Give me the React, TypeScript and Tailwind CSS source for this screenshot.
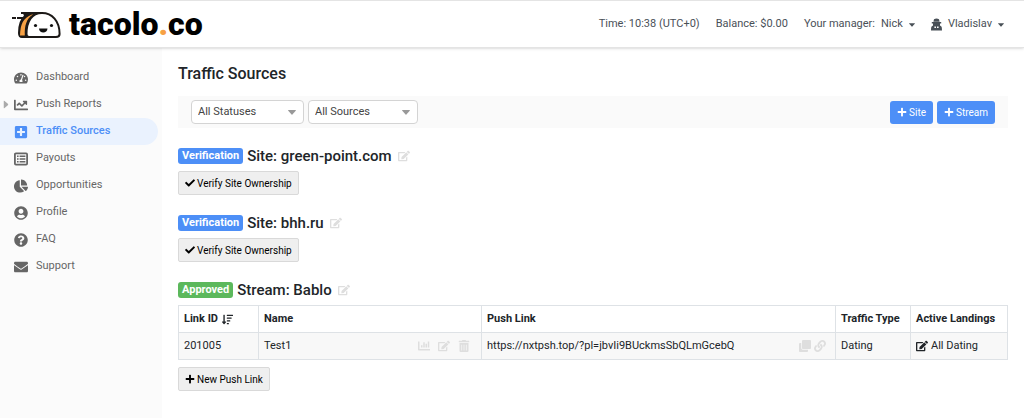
import React from "react";
import {
  FaTachometerAlt, FaChartLine, FaPlusSquare, FaChartPie, FaUserCircle, FaQuestionCircle,
  FaEnvelope, FaEdit, FaCheck, FaPlus, FaChartBar, FaTrashAlt, FaClone, FaLink, FaSortAmountDown,
} from "react-icons/fa";

function ListIcon() {
  return (
    <svg viewBox="0 0 14 14" className="size-3.5" aria-hidden="true">
      <rect x="0.9" y="1.4" width="12.2" height="11.2" rx="1" fill="none" stroke="currentColor" strokeWidth="1.8" />
      <path d="M3 4.3H4.6M5.6 4.3H11.4M3 7H4.6M5.6 7H11.4M3 9.7H4.6M5.6 9.7H11.4" stroke="currentColor" strokeWidth="1.6" />
    </svg>
  );
}

function AgentIcon() {
  return (
    <svg viewBox="0 0 11 13" className="h-[13px] w-[11px]" fill="currentColor" aria-hidden="true">
      <path d="M3 1.2Q5.5 0 8 1.2L8.6 3.8H2.4ZM0.8 4H10.2V5.4H0.8ZM2 5.4H9V7.6L10.4 8.6Q11 9.4 11 12.4H0Q0 9.4 0.6 8.6L2 7.6Z" />
      <path d="M3.4 8.6H5V10H3.4ZM6 8.6H7.6V10H6Z" fill="#fff" />
    </svg>
  );
}

function DownTriangle({ className = "h-[5px] w-2" }: { className?: string }) {
  return (
    <svg viewBox="0 0 8 5" className={"shrink-0 " + className} fill="currentColor" aria-hidden="true">
      <path d="M0.4 0H7.6Q8.2 0.2 7.7 0.8L4.4 4.6Q4 5 3.6 4.6L0.3 0.8Q-0.2 0.2 0.4 0Z" />
    </svg>
  );
}

const nav = [
  { label: "Dashboard", Icon: FaTachometerAlt },
  { label: "Push Reports", Icon: FaChartLine, expandable: true },
  { label: "Traffic Sources", Icon: FaPlusSquare, active: true },
  { label: "Payouts", Icon: ListIcon },
  { label: "Opportunities", Icon: FaChartPie },
  { label: "Profile", Icon: FaUserCircle },
  { label: "FAQ", Icon: FaQuestionCircle },
  { label: "Support", Icon: FaEnvelope },
];

function Logo() {
  return (
    <a href="#" aria-label="tacolo.co" className="flex items-center gap-[7px]">
      <svg viewBox="0 0 50 30" className="h-[30px] w-[50px]" fill="none" aria-hidden="true">
        <path d="M31 4H12L13 7C8 11 7 18 7 24Q7 28 10 28H18L22 4" fill="#1c1917" stroke="#1c1917" strokeWidth="2" strokeLinejoin="round" />
        <path d="M20 5.500C11 9 8.500 15 8 26.500H12.800C12.500 17 14 10 21 5.500Z" fill="#f7a144" />
        <path d="M17 28H44Q47.600 28 47.600 25C47.600 12 40 4 30 4C20 4 14.500 12 14.500 25Q14.500 28 17 28Z" fill="#fff" stroke="#1c1917" strokeWidth="2" />
        <path d="M9 4H16M0 9H4M5 9H12" stroke="#1c1917" strokeWidth="1.8" />
        <circle cx="23.500" cy="16.500" r="1.600" fill="#111" />
        <circle cx="39.500" cy="16.500" r="1.600" fill="#111" />
        <path d="M27 19.500H35.500C35.500 24.800 27 24.800 27 19.500Z" fill="#111" />
      </svg>
      <span className="text-[32px] leading-10 font-black text-black">
        tacolo<span className="text-[#f7a144]">.</span>co
      </span>
    </a>
  );
}

function Heading({ tag, color, children }: { tag: string; color: string; children: React.ReactNode }) {
  return (
    <h2 className="mb-[7px] flex h-4 items-center text-[15px] font-medium">
      <span className={"mr-1 rounded-[3px] px-1 text-[11px] leading-4 font-bold text-white " + color}>{tag}</span>
      {children}
      <button aria-label="Edit" className="ml-1.5 text-xs text-[#dedede]"><FaEdit /></button>
    </h2>
  );
}

function GrayButton({ icon, children }: { icon: React.ReactNode; children: React.ReactNode }) {
  return (
    <button className="flex h-6 items-center gap-0.5 rounded-xs border border-[#d9d9d9] bg-[#efefef] px-1.5 text-[10px] text-black">
      {icon}{children}
    </button>
  );
}

function BlueButton({ children }: { children: React.ReactNode }) {
  return (
    <button className="flex h-[23px] items-center gap-0.5 rounded-[3px] bg-[#4d8ff7] px-[7px] text-[10px] text-white">
      <FaPlus />{children}
    </button>
  );
}

function SiteBlock({ name }: { name: string }) {
  return (
    <section className="mb-5">
      <Heading tag="Verification" color="bg-[#4d8ff7]">Site: {name}</Heading>
      <GrayButton icon={<FaCheck />}>Verify Site Ownership</GrayButton>
    </section>
  );
}

function Filter({ label, width }: { label: string; width: string }) {
  return (
    <div className={"relative " + width}>
      <select aria-label={label} className="block h-6 w-full appearance-none rounded border border-[#d4d4d4] bg-white pl-1.5 text-[11px] text-[#444]">
        <option>{label}</option>
      </select>
      <DownTriangle className="pointer-events-none absolute top-2.5 right-2 h-[5px] w-2 text-[#999]" />
    </div>
  );
}

export default function App() {
  const cell = "border border-[#dee2e6] px-[5px] text-left whitespace-nowrap";
  return (
    <div className="flex min-h-screen flex-col bg-white font-['Roboto',sans-serif] text-[11px] text-[#212529]">
      <header className="relative flex h-12 items-center justify-between border-t border-b border-[#e4e4e4] pr-5 pl-3 shadow-sm">
        <Logo />
        <div className="flex items-center gap-4 pt-px text-[#495057]">
          <span>Time: 10:38 (UTC+0)</span>
          <span>Balance: $0.00</span>
          <button className="flex items-center gap-1.5"><span>Your manager:</span><span>Nick</span><DownTriangle className="h-1 w-1.5" /></button>
          <button className="flex items-center gap-1.5"><AgentIcon />Vladislav <DownTriangle className="h-1 w-1.5" /></button>
        </div>
      </header>
      <div className="flex flex-1">
        <nav className="w-[162px] shrink-0 bg-[#fbfbfb] pt-4">
          {nav.map(({ label, Icon, active, expandable }) => (
            <a key={label} href="#" className={"mr-1 flex h-[27px] items-center rounded-r-full " + (active ? "bg-[#eaf2fe] font-medium text-[#4d8ff7]" : "text-[#666]")}>
              <span className="w-3.5 pl-0.5 text-[#aaa]">
                {expandable && <DownTriangle className="h-[5px] w-2 -rotate-90" />}
              </span>
              <span className="flex w-[22px] text-sm"><Icon /></span>
              {label}
            </a>
          ))}
        </nav>
        <main className="min-w-0 flex-1 px-4 pt-4">
          <h1 className="mb-3 text-base leading-5 font-medium">Traffic Sources</h1>
          <div className="mb-5 flex h-8 items-center gap-1 bg-[#fafafa] px-[13px]">
            <Filter label="All Statuses" width="w-[113px]" />
            <Filter label="All Sources" width="w-[110px]" />
            <div className="ml-auto flex gap-1">
              <BlueButton>Site</BlueButton>
              <BlueButton>Stream</BlueButton>
            </div>
          </div>
          <SiteBlock name="green-point.com" />
          <SiteBlock name="bhh.ru" />
          <section>
            <Heading tag="Approved" color="bg-[#5cb85c]">Stream: Bablo</Heading>
            <table className="mb-[7px] w-full table-fixed border-collapse">
              <thead>
                <tr className="h-[27px]">
                  <th className={cell + " w-[80px]"}><span className="flex items-center gap-1">Link ID <FaSortAmountDown /></span></th>
                  <th className={cell + " w-[223px]"}>Name</th>
                  <th className={cell}>Push Link</th>
                  <th className={cell + " w-[75px]"}>Traffic Type</th>
                  <th className={cell + " w-[97px]"}>Active Landings</th>
                </tr>
              </thead>
              <tbody>
                <tr className="h-[27px] bg-[#f8f8f8]">
                  <td className={cell}>201005</td>
                  <td className={cell}>
                    <div className="flex items-center justify-between">
                      Test1
                      <span className="flex items-center gap-2 pr-1.5 text-xs text-[#dedede]">
                        <button aria-label="Statistics"><FaChartBar /></button>
                        <button aria-label="Edit"><FaEdit /></button>
                        <button aria-label="Delete"><FaTrashAlt /></button>
                      </span>
                    </div>
                  </td>
                  <td className={cell}>
                    <div className="flex items-center justify-between">
                      https://nxtpsh.top/?pl=jbvIi9BUckmsSbQLmGcebQ
                      <span className="flex items-center gap-[3px] pr-1 text-xs text-[#dedede]">
                        <button aria-label="Copy"><FaClone /></button>
                        <button aria-label="Open link"><FaLink /></button>
                      </span>
                    </div>
                  </td>
                  <td className={cell}>Dating</td>
                  <td className={cell}>
                    <button className="flex items-center gap-[3px]"><FaEdit className="text-xs" />All Dating</button>
                  </td>
                </tr>
              </tbody>
            </table>
            <GrayButton icon={<FaPlus />}>New Push Link</GrayButton>
          </section>
        </main>
      </div>
    </div>
  );
}
